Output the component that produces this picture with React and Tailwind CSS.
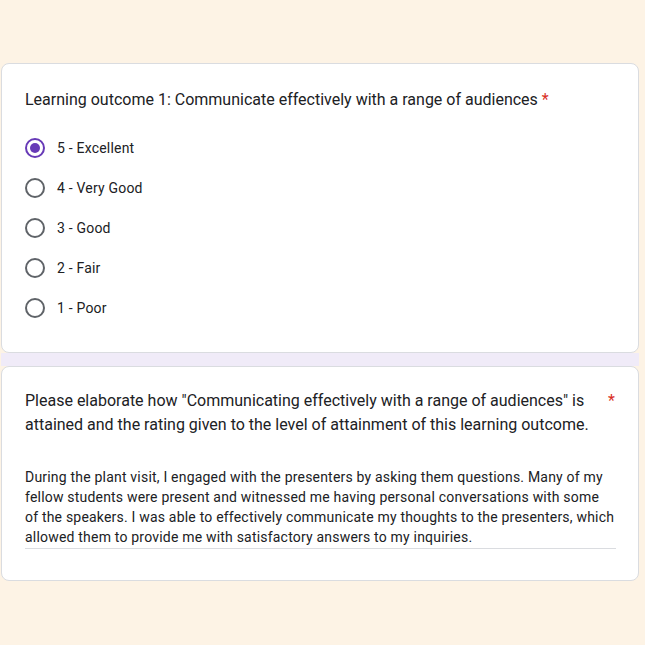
import React from 'react'

const options = ['5 - Excellent', '4 - Very Good', '3 - Good', '2 - Fair', '1 - Poor']

function Radio({ checked }) {
  return (
    <span
      className={
        'flex h-5 w-5 shrink-0 items-center justify-center rounded-full border-2 ' +
        (checked ? 'border-[#673ab7]' : 'border-[#5f6368]')
      }
    >
      {checked && <span className="h-[10px] w-[10px] rounded-full bg-[#673ab7]" />}
    </span>
  )
}

export default function App() {
  return (
    <div className="min-h-screen bg-[#fdf3e5] pt-[63px] text-[#202124]" style={{ fontFamily: 'Roboto, "Liberation Sans", sans-serif' }}>
      <div className="ml-[1px] w-[638px]">
        {/* Question 1 */}
        <div className="rounded-lg border border-[#dadce0] bg-white px-[23px] pt-6 pb-6">
          <h2 className="text-base leading-6">
            Learning outcome 1: Communicate effectively with a range of audiences{' '}
            <span className="text-[#d93025]">*</span>
          </h2>
          <div className="mt-4 flex flex-col">
            {options.map((o, i) => (
              <label key={o} className="flex h-10 items-center gap-[12px]">
                <Radio checked={i === 0} />
                <span className="text-sm tracking-[0.2px]">{o}</span>
              </label>
            ))}
          </div>
        </div>

        <div className="h-[13px] bg-[#f0ebf8]" />

        {/* Question 2 */}
        <div className="rounded-lg border border-[#dadce0] bg-white pl-[23px] pr-[22px] pt-[22px] pb-[31px]">
          <div className="flex gap-4 pr-px">
            <h2 className="flex-1 text-base leading-6">
              Please elaborate how "Communicating effectively with a range of audiences" is attained and the rating given to the level of attainment of this learning outcome.
            </h2>
            <span className="text-base leading-6 text-[#d93025]">*</span>
          </div>
          <div className="mt-[30px] border-b border-[#dadce0] pb-[1px]">
            <p className="w-[590px] text-sm leading-5 tracking-[0.2px]">
              During the plant visit, I engaged with the presenters by asking them questions. Many of my fellow students were present and witnessed me having personal conversations with some of the speakers. I was able to effectively communicate my thoughts to the presenters, which allowed them to provide me with satisfactory answers to my inquiries.
            </p>
          </div>
        </div>
      </div>
    </div>
  )
}
